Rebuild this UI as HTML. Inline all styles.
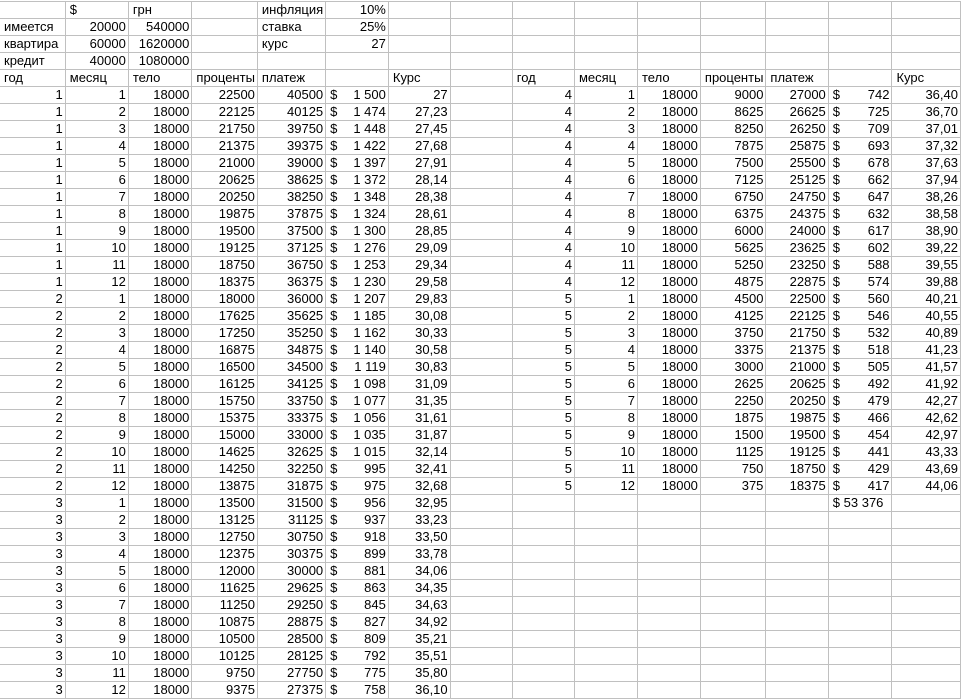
<!DOCTYPE html>
<html><head><meta charset="utf-8"><style>
body{margin:0;background:#fff;width:962px;height:698px;overflow:hidden}
table{position:absolute;left:-1px;top:1px;border-collapse:collapse;table-layout:fixed;font:13px "Liberation Sans",Arial,sans-serif;color:#000}
td{border:1px solid #c0c0c0;height:16px;padding:0 2px;text-align:right;white-space:nowrap;overflow:hidden;line-height:16px}
td.l{text-align:left;padding-left:4px}
.d{float:left;padding-left:2px}
</style></head><body>
<table>
<colgroup><col style="width:66px"><col style="width:64px"><col style="width:64px"><col style="width:63px"><col style="width:65px"><col style="width:64px"><col style="width:63px"><col style="width:65px"><col style="width:64px"><col style="width:64px"><col style="width:64px"><col style="width:61px"><col style="width:63px"><col style="width:64px"><col style="width:70px"></colgroup>
<tr><td></td><td class="l">$</td><td class="l">грн</td><td></td><td class="l">инфляция</td><td>10%</td><td></td><td></td><td></td><td></td><td></td><td></td><td></td><td></td><td></td></tr>
<tr><td class="l">имеется</td><td>20000</td><td>540000</td><td></td><td class="l">ставка</td><td>25%</td><td></td><td></td><td></td><td></td><td></td><td></td><td></td><td></td><td></td></tr>
<tr><td class="l">квартира</td><td>60000</td><td>1620000</td><td></td><td class="l">курс</td><td>27</td><td></td><td></td><td></td><td></td><td></td><td></td><td></td><td></td><td></td></tr>
<tr><td class="l">кредит</td><td>40000</td><td>1080000</td><td></td><td></td><td></td><td></td><td></td><td></td><td></td><td></td><td></td><td></td><td></td><td></td></tr>
<tr><td class="l">год</td><td class="l">месяц</td><td class="l">тело</td><td class="l">проценты</td><td class="l">платеж</td><td></td><td class="l">Курс</td><td></td><td class="l">год</td><td class="l">месяц</td><td class="l">тело</td><td class="l">проценты</td><td class="l">платеж</td><td></td><td class="l">Курс</td></tr>
<tr><td>1</td><td>1</td><td>18000</td><td>22500</td><td>40500</td><td><span class="d">$</span>1 500</td><td>27</td><td></td><td>4</td><td>1</td><td>18000</td><td>9000</td><td>27000</td><td><span class="d">$</span>742</td><td>36,40</td></tr>
<tr><td>1</td><td>2</td><td>18000</td><td>22125</td><td>40125</td><td><span class="d">$</span>1 474</td><td>27,23</td><td></td><td>4</td><td>2</td><td>18000</td><td>8625</td><td>26625</td><td><span class="d">$</span>725</td><td>36,70</td></tr>
<tr><td>1</td><td>3</td><td>18000</td><td>21750</td><td>39750</td><td><span class="d">$</span>1 448</td><td>27,45</td><td></td><td>4</td><td>3</td><td>18000</td><td>8250</td><td>26250</td><td><span class="d">$</span>709</td><td>37,01</td></tr>
<tr><td>1</td><td>4</td><td>18000</td><td>21375</td><td>39375</td><td><span class="d">$</span>1 422</td><td>27,68</td><td></td><td>4</td><td>4</td><td>18000</td><td>7875</td><td>25875</td><td><span class="d">$</span>693</td><td>37,32</td></tr>
<tr><td>1</td><td>5</td><td>18000</td><td>21000</td><td>39000</td><td><span class="d">$</span>1 397</td><td>27,91</td><td></td><td>4</td><td>5</td><td>18000</td><td>7500</td><td>25500</td><td><span class="d">$</span>678</td><td>37,63</td></tr>
<tr><td>1</td><td>6</td><td>18000</td><td>20625</td><td>38625</td><td><span class="d">$</span>1 372</td><td>28,14</td><td></td><td>4</td><td>6</td><td>18000</td><td>7125</td><td>25125</td><td><span class="d">$</span>662</td><td>37,94</td></tr>
<tr><td>1</td><td>7</td><td>18000</td><td>20250</td><td>38250</td><td><span class="d">$</span>1 348</td><td>28,38</td><td></td><td>4</td><td>7</td><td>18000</td><td>6750</td><td>24750</td><td><span class="d">$</span>647</td><td>38,26</td></tr>
<tr><td>1</td><td>8</td><td>18000</td><td>19875</td><td>37875</td><td><span class="d">$</span>1 324</td><td>28,61</td><td></td><td>4</td><td>8</td><td>18000</td><td>6375</td><td>24375</td><td><span class="d">$</span>632</td><td>38,58</td></tr>
<tr><td>1</td><td>9</td><td>18000</td><td>19500</td><td>37500</td><td><span class="d">$</span>1 300</td><td>28,85</td><td></td><td>4</td><td>9</td><td>18000</td><td>6000</td><td>24000</td><td><span class="d">$</span>617</td><td>38,90</td></tr>
<tr><td>1</td><td>10</td><td>18000</td><td>19125</td><td>37125</td><td><span class="d">$</span>1 276</td><td>29,09</td><td></td><td>4</td><td>10</td><td>18000</td><td>5625</td><td>23625</td><td><span class="d">$</span>602</td><td>39,22</td></tr>
<tr><td>1</td><td>11</td><td>18000</td><td>18750</td><td>36750</td><td><span class="d">$</span>1 253</td><td>29,34</td><td></td><td>4</td><td>11</td><td>18000</td><td>5250</td><td>23250</td><td><span class="d">$</span>588</td><td>39,55</td></tr>
<tr><td>1</td><td>12</td><td>18000</td><td>18375</td><td>36375</td><td><span class="d">$</span>1 230</td><td>29,58</td><td></td><td>4</td><td>12</td><td>18000</td><td>4875</td><td>22875</td><td><span class="d">$</span>574</td><td>39,88</td></tr>
<tr><td>2</td><td>1</td><td>18000</td><td>18000</td><td>36000</td><td><span class="d">$</span>1 207</td><td>29,83</td><td></td><td>5</td><td>1</td><td>18000</td><td>4500</td><td>22500</td><td><span class="d">$</span>560</td><td>40,21</td></tr>
<tr><td>2</td><td>2</td><td>18000</td><td>17625</td><td>35625</td><td><span class="d">$</span>1 185</td><td>30,08</td><td></td><td>5</td><td>2</td><td>18000</td><td>4125</td><td>22125</td><td><span class="d">$</span>546</td><td>40,55</td></tr>
<tr><td>2</td><td>3</td><td>18000</td><td>17250</td><td>35250</td><td><span class="d">$</span>1 162</td><td>30,33</td><td></td><td>5</td><td>3</td><td>18000</td><td>3750</td><td>21750</td><td><span class="d">$</span>532</td><td>40,89</td></tr>
<tr><td>2</td><td>4</td><td>18000</td><td>16875</td><td>34875</td><td><span class="d">$</span>1 140</td><td>30,58</td><td></td><td>5</td><td>4</td><td>18000</td><td>3375</td><td>21375</td><td><span class="d">$</span>518</td><td>41,23</td></tr>
<tr><td>2</td><td>5</td><td>18000</td><td>16500</td><td>34500</td><td><span class="d">$</span>1 119</td><td>30,83</td><td></td><td>5</td><td>5</td><td>18000</td><td>3000</td><td>21000</td><td><span class="d">$</span>505</td><td>41,57</td></tr>
<tr><td>2</td><td>6</td><td>18000</td><td>16125</td><td>34125</td><td><span class="d">$</span>1 098</td><td>31,09</td><td></td><td>5</td><td>6</td><td>18000</td><td>2625</td><td>20625</td><td><span class="d">$</span>492</td><td>41,92</td></tr>
<tr><td>2</td><td>7</td><td>18000</td><td>15750</td><td>33750</td><td><span class="d">$</span>1 077</td><td>31,35</td><td></td><td>5</td><td>7</td><td>18000</td><td>2250</td><td>20250</td><td><span class="d">$</span>479</td><td>42,27</td></tr>
<tr><td>2</td><td>8</td><td>18000</td><td>15375</td><td>33375</td><td><span class="d">$</span>1 056</td><td>31,61</td><td></td><td>5</td><td>8</td><td>18000</td><td>1875</td><td>19875</td><td><span class="d">$</span>466</td><td>42,62</td></tr>
<tr><td>2</td><td>9</td><td>18000</td><td>15000</td><td>33000</td><td><span class="d">$</span>1 035</td><td>31,87</td><td></td><td>5</td><td>9</td><td>18000</td><td>1500</td><td>19500</td><td><span class="d">$</span>454</td><td>42,97</td></tr>
<tr><td>2</td><td>10</td><td>18000</td><td>14625</td><td>32625</td><td><span class="d">$</span>1 015</td><td>32,14</td><td></td><td>5</td><td>10</td><td>18000</td><td>1125</td><td>19125</td><td><span class="d">$</span>441</td><td>43,33</td></tr>
<tr><td>2</td><td>11</td><td>18000</td><td>14250</td><td>32250</td><td><span class="d">$</span>995</td><td>32,41</td><td></td><td>5</td><td>11</td><td>18000</td><td>750</td><td>18750</td><td><span class="d">$</span>429</td><td>43,69</td></tr>
<tr><td>2</td><td>12</td><td>18000</td><td>13875</td><td>31875</td><td><span class="d">$</span>975</td><td>32,68</td><td></td><td>5</td><td>12</td><td>18000</td><td>375</td><td>18375</td><td><span class="d">$</span>417</td><td>44,06</td></tr>
<tr><td>3</td><td>1</td><td>18000</td><td>13500</td><td>31500</td><td><span class="d">$</span>956</td><td>32,95</td><td></td><td></td><td></td><td></td><td></td><td></td><td class="l">$ 53 376</td><td></td></tr>
<tr><td>3</td><td>2</td><td>18000</td><td>13125</td><td>31125</td><td><span class="d">$</span>937</td><td>33,23</td><td></td><td></td><td></td><td></td><td></td><td></td><td></td><td></td></tr>
<tr><td>3</td><td>3</td><td>18000</td><td>12750</td><td>30750</td><td><span class="d">$</span>918</td><td>33,50</td><td></td><td></td><td></td><td></td><td></td><td></td><td></td><td></td></tr>
<tr><td>3</td><td>4</td><td>18000</td><td>12375</td><td>30375</td><td><span class="d">$</span>899</td><td>33,78</td><td></td><td></td><td></td><td></td><td></td><td></td><td></td><td></td></tr>
<tr><td>3</td><td>5</td><td>18000</td><td>12000</td><td>30000</td><td><span class="d">$</span>881</td><td>34,06</td><td></td><td></td><td></td><td></td><td></td><td></td><td></td><td></td></tr>
<tr><td>3</td><td>6</td><td>18000</td><td>11625</td><td>29625</td><td><span class="d">$</span>863</td><td>34,35</td><td></td><td></td><td></td><td></td><td></td><td></td><td></td><td></td></tr>
<tr><td>3</td><td>7</td><td>18000</td><td>11250</td><td>29250</td><td><span class="d">$</span>845</td><td>34,63</td><td></td><td></td><td></td><td></td><td></td><td></td><td></td><td></td></tr>
<tr><td>3</td><td>8</td><td>18000</td><td>10875</td><td>28875</td><td><span class="d">$</span>827</td><td>34,92</td><td></td><td></td><td></td><td></td><td></td><td></td><td></td><td></td></tr>
<tr><td>3</td><td>9</td><td>18000</td><td>10500</td><td>28500</td><td><span class="d">$</span>809</td><td>35,21</td><td></td><td></td><td></td><td></td><td></td><td></td><td></td><td></td></tr>
<tr><td>3</td><td>10</td><td>18000</td><td>10125</td><td>28125</td><td><span class="d">$</span>792</td><td>35,51</td><td></td><td></td><td></td><td></td><td></td><td></td><td></td><td></td></tr>
<tr><td>3</td><td>11</td><td>18000</td><td>9750</td><td>27750</td><td><span class="d">$</span>775</td><td>35,80</td><td></td><td></td><td></td><td></td><td></td><td></td><td></td><td></td></tr>
<tr><td>3</td><td>12</td><td>18000</td><td>9375</td><td>27375</td><td><span class="d">$</span>758</td><td>36,10</td><td></td><td></td><td></td><td></td><td></td><td></td><td></td><td></td></tr>
</table>
</body></html>
